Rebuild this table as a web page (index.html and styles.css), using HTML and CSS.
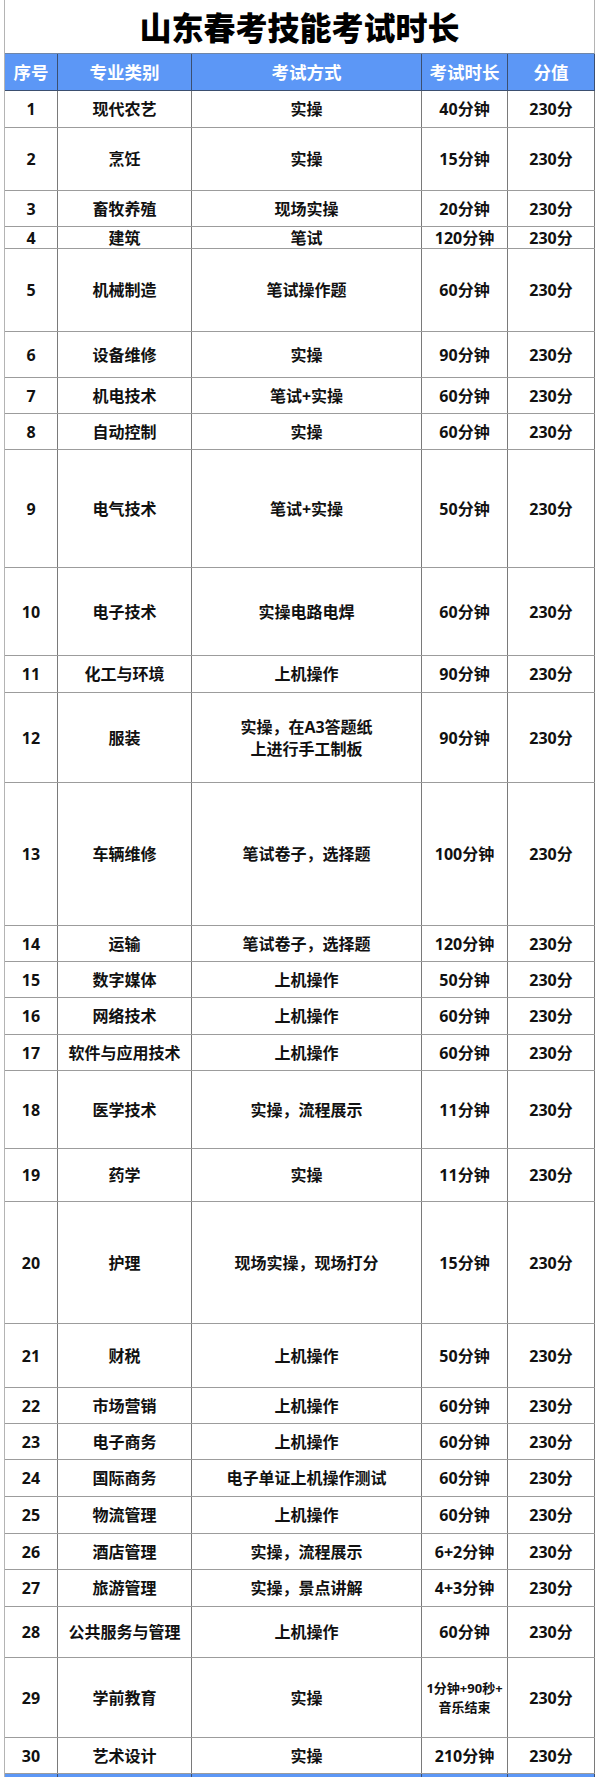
FILE: index.html
```html
<!DOCTYPE html>
<html lang="zh-CN">
<head>
<meta charset="utf-8">
<title>山东春考技能考试时长</title>
<link rel="stylesheet" href="styles.css">
</head>
<body>
<div class="sheet">
  <div class="title">山东春考技能考试时长</div>
  <div class="row head h37"><div>序号</div><div>专业类别</div><div>考试方式</div><div>考试时长</div><div>分值</div></div>
  <div class="row h37"><div>1</div><div>现代农艺</div><div>实操</div><div>40分钟</div><div>230分</div></div>
  <div class="row h63"><div>2</div><div>烹饪</div><div>实操</div><div>15分钟</div><div>230分</div></div>
  <div class="row h36"><div>3</div><div>畜牧养殖</div><div>现场实操</div><div>20分钟</div><div>230分</div></div>
  <div class="row h22"><div>4</div><div>建筑</div><div>笔试</div><div>120分钟</div><div>230分</div></div>
  <div class="row h83"><div>5</div><div>机械制造</div><div>笔试操作题</div><div>60分钟</div><div>230分</div></div>
  <div class="row h46"><div>6</div><div>设备维修</div><div>实操</div><div>90分钟</div><div>230分</div></div>
  <div class="row h36"><div>7</div><div>机电技术</div><div>笔试+实操</div><div>60分钟</div><div>230分</div></div>
  <div class="row h36"><div>8</div><div>自动控制</div><div>实操</div><div>60分钟</div><div>230分</div></div>
  <div class="row h118"><div>9</div><div>电气技术</div><div>笔试+实操</div><div>50分钟</div><div>230分</div></div>
  <div class="row h88"><div>10</div><div>电子技术</div><div>实操电路电焊</div><div>60分钟</div><div>230分</div></div>
  <div class="row h37"><div>11</div><div>化工与环境</div><div>上机操作</div><div>90分钟</div><div>230分</div></div>
  <div class="row h90"><div>12</div><div>服装</div><div class="two">实操，在A3答题纸<br>上进行手工制板</div><div>90分钟</div><div>230分</div></div>
  <div class="row h143"><div>13</div><div>车辆维修</div><div>笔试卷子，选择题</div><div>100分钟</div><div>230分</div></div>
  <div class="row h36"><div>14</div><div>运输</div><div>笔试卷子，选择题</div><div>120分钟</div><div>230分</div></div>
  <div class="row h36"><div>15</div><div>数字媒体</div><div>上机操作</div><div>50分钟</div><div>230分</div></div>
  <div class="row h37"><div>16</div><div>网络技术</div><div>上机操作</div><div>60分钟</div><div>230分</div></div>
  <div class="row h36"><div>17</div><div>软件与应用技术</div><div>上机操作</div><div>60分钟</div><div>230分</div></div>
  <div class="row h78"><div>18</div><div>医学技术</div><div>实操，流程展示</div><div>11分钟</div><div>230分</div></div>
  <div class="row h53"><div>19</div><div>药学</div><div>实操</div><div>11分钟</div><div>230分</div></div>
  <div class="row h122"><div>20</div><div>护理</div><div>现场实操，现场打分</div><div>15分钟</div><div>230分</div></div>
  <div class="row h64"><div>21</div><div>财税</div><div>上机操作</div><div>50分钟</div><div>230分</div></div>
  <div class="row h36"><div>22</div><div>市场营销</div><div>上机操作</div><div>60分钟</div><div>230分</div></div>
  <div class="row h36"><div>23</div><div>电子商务</div><div>上机操作</div><div>60分钟</div><div>230分</div></div>
  <div class="row h37"><div>24</div><div>国际商务</div><div>电子单证上机操作测试</div><div>60分钟</div><div>230分</div></div>
  <div class="row h37"><div>25</div><div>物流管理</div><div>上机操作</div><div>60分钟</div><div>230分</div></div>
  <div class="row h36"><div>26</div><div>酒店管理</div><div>实操，流程展示</div><div>6+2分钟</div><div>230分</div></div>
  <div class="row h37"><div>27</div><div>旅游管理</div><div>实操，景点讲解</div><div>4+3分钟</div><div>230分</div></div>
  <div class="row h51"><div>28</div><div>公共服务与管理</div><div>上机操作</div><div>60分钟</div><div>230分</div></div>
  <div class="row h80"><div>29</div><div>学前教育</div><div>实操</div><div class="small">1分钟+90秒+<br>音乐结束</div><div>230分</div></div>
  <div class="row h36"><div>30</div><div>艺术设计</div><div>实操</div><div>210分钟</div><div>230分</div></div>
  <div class="row head foot"><div></div><div></div><div></div><div></div><div></div></div>
</div>
</body>
</html>
```
FILE: styles.css
```css
* { box-sizing: border-box; }
html, body { margin: 0; padding: 0; background: #ffffff; }
body { height: 1777px; overflow: hidden; }

.sheet {
  width: 591px;
  margin-left: 4px;
  border-left: 1px solid #b4b4b4;
  font-family: "Open Sans", "Noto Sans CJK SC", sans-serif;
  font-weight: 700;
  color: #111111;
}

.title {
  height: 54px;
  border-right: 1px solid #b4b4b4;
  border-bottom: 1px solid #6f86a8;
  display: flex;
  align-items: center;
  justify-content: center;
  padding-bottom: 1px;
  font-family: "Noto Sans CJK SC", sans-serif;
  font-weight: 900;
  font-size: 32px;
  color: #000000;
}

.row {
  display: grid;
  grid-template-columns: 53px 134px 230px 86px 87px;
  border-bottom: 1px solid #9c9c9c;
}

.row > div {
  border-right: 1px solid #7a7a7a;
  display: flex;
  align-items: center;
  justify-content: center;
  text-align: center;
  font-size: 16px;
  line-height: 20px;
  white-space: nowrap;
}

.row > div.two { line-height: 22px; }
.row > div.small { font-size: 13px; line-height: 19px; }

.head {
  background: #5c97f6;
  border-bottom: 1px solid #3b4f70;
}
.head > div {
  color: #ffffff;
  font-family: "Noto Sans CJK SC", sans-serif;
  font-size: 17.5px;
  border-right-color: #3b4f70;
}
.foot { height: 20px; border-bottom: none; }

.h22 { height: 22px; }
.h36 { height: 36px; }
.h37 { height: 37px; }
.h46 { height: 46px; }
.h51 { height: 51px; }
.h53 { height: 53px; }
.h63 { height: 63px; }
.h64 { height: 64px; }
.h78 { height: 78px; }
.h80 { height: 80px; }
.h83 { height: 83px; }
.h88 { height: 88px; }
.h90 { height: 90px; }
.h118 { height: 118px; }
.h122 { height: 122px; }
.h143 { height: 143px; }
```
